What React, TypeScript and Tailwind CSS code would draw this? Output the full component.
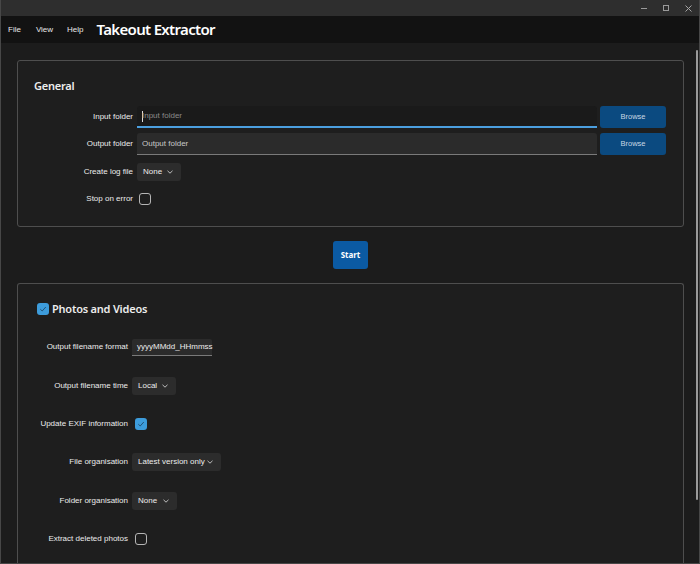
import React from 'react';

const font = { fontFamily: '"Liberation Sans", Arial, sans-serif' };
const headFont = { fontFamily: '"Noto Sans", "Open Sans", sans-serif' };

const Chevron: React.FC = () => (
  <svg width="6" height="4" viewBox="0 0 6 4" className="ml-auto shrink-0">
    <path d="M0.5 0.8 L3 3.2 L5.5 0.8" fill="none" stroke="#cfcfcf" strokeWidth="0.9" />
  </svg>
);

const Dropdown: React.FC<{ value: string; w: string }> = ({ value, w }) => (
  <div className={`flex items-center h-[18px] ${w} rounded-[3px] bg-[#2c2c2c] pl-[6px] pr-[8px] text-[8px] text-[#ececec] whitespace-nowrap`}>
    <span>{value}</span>
    <Chevron />
  </div>
);

const Check: React.FC<{ on?: boolean; className?: string }> = ({ on, className }) =>
  on ? (
    <div className={`w-[12px] h-[12px] rounded-[3px] bg-[#3d9cdb] flex items-center justify-center ${className || ''}`}>
      <svg width="8" height="8" viewBox="0 0 8 8">
        <path d="M1.3 4.2 L3.2 6 L6.8 2" fill="none" stroke="#1d4a6b" strokeWidth="0.9" />
      </svg>
    </div>
  ) : (
    <div className={`w-[12px] h-[12px] rounded-[3px] border border-[#b5b5b5] ${className || ''}`} />
  );

const GRow: React.FC<{ label: string; className?: string; children: React.ReactNode }> = ({ label, className, children }) => (
  <div className={`flex items-center ${className || ''}`}>
    <div className="w-[119px] shrink-0 text-right text-[8px] text-[#ececec] pr-[4px]">{label}</div>
    {children}
  </div>
);

const PRow: React.FC<{ label: string; children: React.ReactNode }> = ({ label, children }) => (
  <div className="flex items-center h-[38.4px]">
    <div className="w-[114px] shrink-0 text-right text-[8px] text-[#ececec] pr-[4px] whitespace-nowrap">{label}</div>
    {children}
  </div>
);

const Browse: React.FC = () => (
  <button className="ml-[3px] shrink-0 w-[66px] h-[22px] rounded-[3px] bg-[#0b4a80] text-[7.5px] text-[#c9d6e3]">Browse</button>
);

export default function App() {
  return (
    <div style={font} className="w-[700px] h-[564px] overflow-hidden bg-[#1c1c1c] flex flex-col border-x border-b border-[#474747] relative">
      {/* title bar */}
      <div className="h-[16px] bg-[#2e2e2e] flex items-center justify-end shrink-0">
        <div className="w-[22px] flex justify-center">
          <div className="w-[6px] h-px bg-[#9a9a9a]" />
        </div>
        <div className="w-[22px] flex justify-center">
          <div className="w-[6px] h-[6px] border border-[#9a9a9a]" />
        </div>
        <div className="w-[22px] flex justify-center">
          <svg width="7" height="7" viewBox="0 0 7 7">
            <path d="M0.5 0.5 L6.5 6.5 M6.5 0.5 L0.5 6.5" stroke="#a5a5a5" strokeWidth="1" />
          </svg>
        </div>
      </div>
      {/* menu bar */}
      <div className="h-[27px] bg-[#121212] flex items-center pl-[7px] shrink-0 text-[#e8e8e8]">
        <span className="text-[8px]">File</span>
        <span className="text-[8px] ml-[15px]">View</span>
        <span className="text-[8px] ml-[14px]">Help</span>
        <span style={headFont} className="text-[15px] tracking-[-0.045em] font-semibold ml-[13px] text-white">Takeout Extractor</span>
      </div>

      {/* content */}
      <div className="flex-1 pt-[17px] pl-[16px] pr-[15px] flex flex-col">
        <div className="border border-[#4e4e4e] rounded-[3px] bg-[#1e1e1e] h-[167px] pt-[18px] pr-[17px]">
          <div style={headFont} className="pl-[16px] text-[11px] tracking-[-0.02em] font-semibold text-[#ededed] leading-[14px]">General</div>
          <GRow label="Input folder" className="mt-[13px]">
            <div className="flex-1 h-[22px] bg-[#1a1a1a] border-b-2 border-[#4b9fdf] rounded-t-[3px] flex items-center pl-[5px] text-[8px] text-[#8a8a8a]">
              <span className="w-px h-[11px] bg-[#dcdcdc]" />
              <span className="-ml-[1px]">Input folder</span>
            </div>
            <Browse />
          </GRow>
          <GRow label="Output folder" className="mt-[5px]">
            <div className="flex-1 h-[22px] bg-[#2b2b2b] border-b border-[#7a7a7a] rounded-t-[3px] flex items-center pl-[5px] text-[8px] text-[#c8c8c8]">
              Output folder
            </div>
            <Browse />
          </GRow>
          <GRow label="Create log file" className="mt-[8px]">
            <Dropdown value="None" w="w-[44px]" />
          </GRow>
          <GRow label="Stop on error" className="mt-[12px]">
            <Check className="ml-[2px]" />
          </GRow>
        </div>

        <div className="flex justify-center mt-[14px]">
          <button style={headFont} className="w-[35px] h-[28px] rounded-[3px] bg-[#0b5aa3] text-[8px] font-bold text-white">Start</button>
        </div>

        <div className="mt-[14px] border border-[#4e4e4e] rounded-t-[3px] border-b-0 bg-[#1e1e1e] flex-1 pt-[6px]">
          <div className="flex items-center h-[38px] pl-[19px]">
            <Check on />
            <span style={headFont} className="ml-[3px] text-[11px] tracking-[-0.02em] font-semibold text-[#ededed]">Photos and Videos</span>
          </div>
          <PRow label="Output filename format">
            <div className="w-[80px] h-[17px] bg-[#2b2b2b] border-b border-[#7a7a7a] rounded-t-[2px] flex items-center pl-[5px] text-[8px] text-[#ececec] whitespace-nowrap">
              yyyyMMdd_HHmmss
            </div>
          </PRow>
          <PRow label="Output filename time">
            <Dropdown value="Local" w="w-[44px]" />
          </PRow>
          <PRow label="Update EXIF information">
            <Check on className="ml-[3px]" />
          </PRow>
          <PRow label="File organisation">
            <Dropdown value="Latest version only" w="w-[89px]" />
          </PRow>
          <PRow label="Folder organisation">
            <Dropdown value="None" w="w-[45px]" />
          </PRow>
          <PRow label="Extract deleted photos">
            <Check className="ml-[3px]" />
          </PRow>
        </div>
      </div>

      {/* scrollbar */}
      <div className="absolute right-[1px] top-[50px] w-[2px] h-[450px] rounded-full bg-[#9a9a9a]" />
    </div>
  );
}
